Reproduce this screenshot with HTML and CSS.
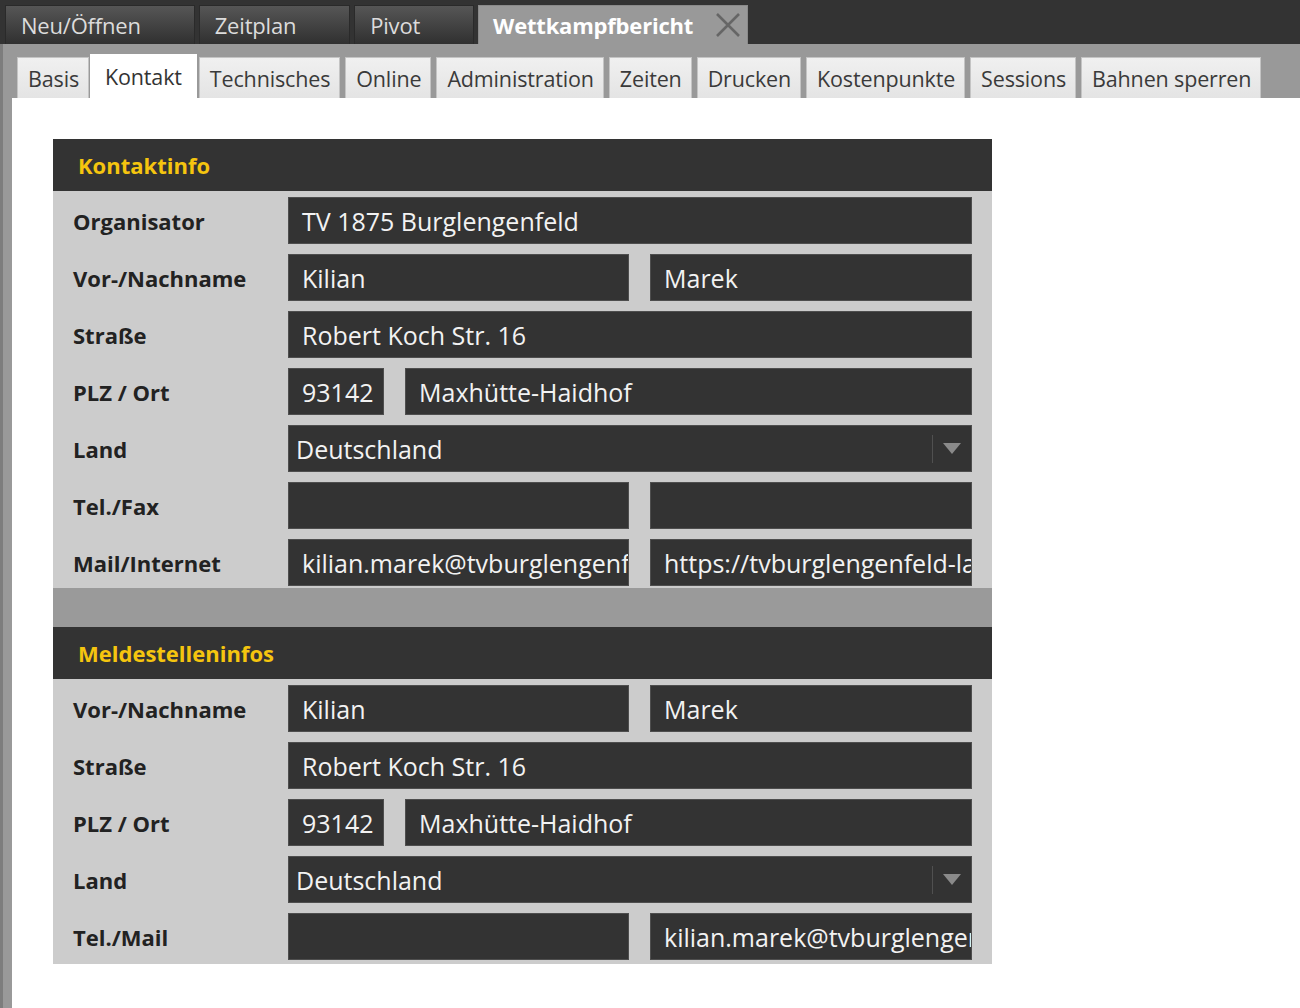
FILE: index.html
```html
<!DOCTYPE html>
<html lang="de">
<head>
<meta charset="utf-8">
<title>Wettkampfbericht – Kontakt</title>
<link rel="stylesheet" href="styles.css">
</head>
<body>
<div class="topbar">
  <div class="ttab">Neu/Öffnen</div>
  <div class="ttab">Zeitplan</div>
  <div class="ttab">Pivot</div>
  <div class="ttab active">Wettkampfbericht
    <svg class="close" width="26" height="26" viewBox="0 0 26 26"><path d="M2 2 L24 24 M24 2 L2 24" stroke="#666" stroke-width="2.6" fill="none"/></svg>
  </div>
</div>
<div class="frame">
  <div class="subtabs">
    <div class="stab">Basis</div>
    <div class="stab active">Kontakt</div>
    <div class="stab">Technisches</div>
    <div class="stab">Online</div>
    <div class="stab">Administration</div>
    <div class="stab">Zeiten</div>
    <div class="stab">Drucken</div>
    <div class="stab">Kostenpunkte</div>
    <div class="stab">Sessions</div>
    <div class="stab">Bahnen sperren</div>
  </div>
  <div class="content">
    <div class="panel">
      <div class="phead">Kontaktinfo</div>
      <div class="pbody">
        <div class="row"><div class="lbl">Organisator</div><div class="fields one"><div class="fld">TV 1875 Burglengenfeld</div></div></div>
        <div class="row"><div class="lbl">Vor-/Nachname</div><div class="fields two"><div class="fld">Kilian</div><div class="fld">Marek</div></div></div>
        <div class="row"><div class="lbl">Straße</div><div class="fields one"><div class="fld">Robert Koch Str. 16</div></div></div>
        <div class="row"><div class="lbl">PLZ / Ort</div><div class="fields plz"><div class="fld">93142</div><div class="fld">Maxhütte-Haidhof</div></div></div>
        <div class="row"><div class="lbl">Land</div><div class="fields one"><div class="fld combo"><span class="ctext">Deutschland</span><span class="carrow"><svg width="18" height="11" viewBox="0 0 18 11"><path d="M0 0 H18 L9 11 Z" fill="#8a8a8a"/></svg></span></div></div></div>
        <div class="row"><div class="lbl">Tel./Fax</div><div class="fields two"><div class="fld"></div><div class="fld"></div></div></div>
        <div class="row"><div class="lbl">Mail/Internet</div><div class="fields two"><div class="fld">kilian.marek@tvburglengenfeld.de</div><div class="fld">https://tvburglengenfeld-laufen.de</div></div></div>
      </div>
      <div class="sep"></div>
      <div class="phead">Meldestelleninfos</div>
      <div class="pbody last">
        <div class="row"><div class="lbl">Vor-/Nachname</div><div class="fields two"><div class="fld">Kilian</div><div class="fld">Marek</div></div></div>
        <div class="row"><div class="lbl">Straße</div><div class="fields one"><div class="fld">Robert Koch Str. 16</div></div></div>
        <div class="row"><div class="lbl">PLZ / Ort</div><div class="fields plz"><div class="fld">93142</div><div class="fld">Maxhütte-Haidhof</div></div></div>
        <div class="row"><div class="lbl">Land</div><div class="fields one"><div class="fld combo"><span class="ctext">Deutschland</span><span class="carrow"><svg width="18" height="11" viewBox="0 0 18 11"><path d="M0 0 H18 L9 11 Z" fill="#8a8a8a"/></svg></span></div></div></div>
        <div class="row"><div class="lbl">Tel./Mail</div><div class="fields two"><div class="fld"></div><div class="fld">kilian.marek@tvburglengenfeld.de</div></div></div>
      </div>
    </div>
  </div>
</div>
</body>
</html>
```
FILE: styles.css
```css
html, body {
  margin: 0;
  padding: 0;
  background: #ffffff;
  font-family: "Open Sans", "Noto Sans", "DejaVu Sans", sans-serif;
}
.topbar {
  background: #333333;
  height: 44px;
  box-sizing: border-box;
  padding: 5px 0 0 5px;
  display: flex;
  align-items: flex-end;
  gap: 4px;
}
.ttab {
  height: 39px;
  box-sizing: border-box;
  padding: 0 53px 0 15px;
  display: flex;
  align-items: center;
  font-size: 22px;
  color: #dcdcdc;
  background: linear-gradient(#565656, #303030);
  border: 1px solid #2a2a2a;
  border-bottom: none;
  letter-spacing: -0.2px;
}
.ttab.active {
  background: #999999;
  color: #ffffff;
  font-weight: 700;
  padding: 0 6px 0 14px;
  border-color: #8a8a8a;
  letter-spacing: -0.2px;
}
.ttab .close {
  margin-left: 22px;
}
.frame {
  background: #999999;
  border-left: 3px solid #7d7d7d;
  padding-left: 9px;
  min-height: 964px;
  box-sizing: border-box;
  display: flex;
  flex-direction: column;
}
.subtabs {
  height: 54px;
  display: flex;
  align-items: flex-end;
  gap: 5px;
  padding-left: 5px;
}
.stab {
  height: 41px;
  box-sizing: border-box;
  padding: 0 9px 0 10px;
  display: flex;
  align-items: center;
  font-size: 21.5px;
  color: #3a3a3a;
  background: linear-gradient(#f0f0f0, #e4e4e4);
  border: 1px solid #c4c4c4;
  border-bottom: none;
  letter-spacing: -0.15px;
}
.stab.active {
  height: 44px;
  background: #ffffff;
  border-color: #ffffff;
  padding: 0 14px;
  margin-left: -4px;
  margin-right: -3px;
  color: #333333;
}
.content {
  flex: 1;
  background: #ffffff;
  padding: 41px 0 0 41px;
}
.panel {
  width: 939px;
  background: #cccccc;
}
.phead {
  height: 52px;
  background: #333333;
  color: #f5c50f;
  font-weight: 700;
  font-size: 22px;
  display: flex;
  align-items: center;
  padding-left: 25px;
}
.pbody {
  padding: 6px 20px 2px 0;
  display: flex;
  flex-direction: column;
  gap: 10px;
}
.pbody.last {
  padding-bottom: 4px;
}
.sep {
  height: 39px;
  background: #9a9a9a;
}
.row {
  display: flex;
  height: 47px;
}
.lbl {
  width: 235px;
  box-sizing: border-box;
  padding-left: 20px;
  padding-top: 1px;
  display: flex;
  align-items: center;
  font-weight: 700;
  font-size: 22px;
  color: #222222;
}
.fields {
  flex: 1;
  display: grid;
  column-gap: 21px;
}
.fields.one { grid-template-columns: 1fr; }
.fields.two { grid-template-columns: 341px 1fr; }
.fields.plz { grid-template-columns: 96px 1fr; }
.fld {
  background: #333333;
  border: 1px solid #4e4e4e;
  box-sizing: border-box;
  color: #f2f2f2;
  font-size: 25px;
  padding: 0 6px 0 13px;
  display: flex;
  align-items: center;
  white-space: nowrap;
  overflow: hidden;
  letter-spacing: 0;
}
.fld.combo {
  padding: 0 0 0 7px;
  justify-content: space-between;
}
.ctext {
  flex: 1;
}
.carrow {
  width: 38px;
  height: 28px;
  border-left: 1px solid #505050;
  display: flex;
  align-items: center;
  justify-content: center;
}
```
